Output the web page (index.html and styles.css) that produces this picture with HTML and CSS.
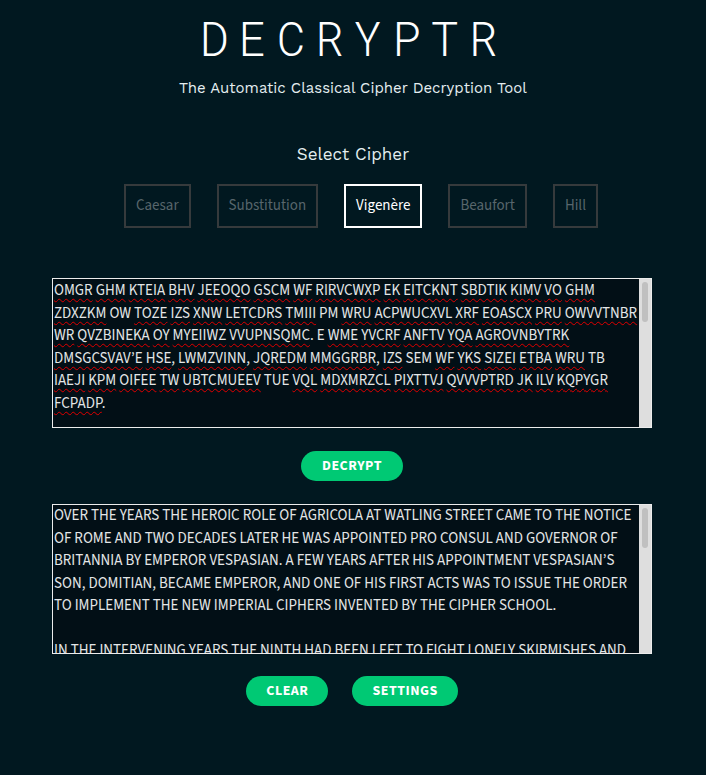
FILE: index.html
```html
<!DOCTYPE html>
<html lang="en">
<head>
<meta charset="utf-8">
<title>Decryptr</title>
<link rel="stylesheet" href="styles.css">
</head>
<body>
<main class="app">
  <header class="header">
    <h1 class="title">DECRYPTR</h1>
    <p class="subtitle">The Automatic Classical Cipher Decryption Tool</p>
  </header>

  <section class="cipher-select">
    <h2 class="select-label">Select Cipher</h2>
    <div class="cipher-row">
      <button class="cipher-btn">Caesar</button>
      <button class="cipher-btn">Substitution</button>
      <button class="cipher-btn active">Vigenère</button>
      <button class="cipher-btn">Beaufort</button>
      <button class="cipher-btn">Hill</button>
    </div>
  </section>

  <div class="textbox input-box">
    <div class="textbox-content">
      <span class="sp">OMGR</span> <span class="sp">GHM</span> <span class="sp">KTEIA</span> <span class="sp">BHV</span> <span class="sp">JEEOQO</span> <span class="sp">GSCM</span> <span class="sp">WF</span> <span class="sp">RIRVCWXP</span> <span class="sp">EK</span> <span class="sp">EITCKNT</span> <span class="sp">SBDTIK</span> <span class="sp">KIMV</span> <span class="sp">VO</span> <span class="sp">GHM</span><br>
      <span class="sp">ZDXZKM</span> OW <span class="sp">TOZE</span> <span class="sp">IZS</span> <span class="sp">XNW</span> <span class="sp">LETCDRS</span> <span class="sp">TMIII</span> PM <span class="sp">WRU</span> <span class="sp">ACPWUCXVL</span> <span class="sp">XRF</span> <span class="sp">EOASCX</span> <span class="sp">PRU</span> <span class="sp">OWVVTNBR</span><br>
      <span class="sp">WR</span> <span class="sp">QVZBINEKA</span> <span class="sp">OY</span> <span class="sp">MYEIIWZ</span> <span class="sp">VVUPNSQMC</span>. E <span class="sp">WME</span> <span class="sp">YVCRF</span> <span class="sp">ANFTV</span> <span class="sp">YQA</span> <span class="sp">AGROVNBYTRK</span><br>
      <span class="sp">DMSGCSVAV’E</span> <span class="sp">HSE</span>, <span class="sp">LWMZVINN</span>, <span class="sp">JQREDM</span> <span class="sp">MMGGRBR</span>, <span class="sp">IZS</span> SEM <span class="sp">WF</span> <span class="sp">YKS</span> <span class="sp">SIZEI</span> <span class="sp">ETBA</span> <span class="sp">WRU</span> TB<br>
      <span class="sp">IAEJI</span> <span class="sp">KPM</span> <span class="sp">OIFEE</span> <span class="sp">TW</span> <span class="sp">UBTCMUEEV</span> TUE <span class="sp">VQL</span> <span class="sp">MDXMRZCL</span> <span class="sp">PIXTTVJ</span> <span class="sp">QVVVPTRD</span> <span class="sp">JK</span> <span class="sp">ILV</span> <span class="sp">KQPYGR</span><br>
      <span class="sp">FCPADP</span>.
    </div>
    <div class="scrollbar"><div class="thumb"></div></div>
  </div>

  <div class="action-row decrypt-row">
    <button class="pill-btn decrypt-btn">DECRYPT</button>
  </div>

  <div class="textbox output-box">
    <div class="textbox-content">
      OVER THE YEARS THE HEROIC ROLE OF AGRICOLA AT WATLING STREET CAME TO THE NOTICE<br>
      OF ROME AND TWO DECADES LATER HE WAS APPOINTED PRO CONSUL AND GOVERNOR OF<br>
      BRITANNIA BY EMPEROR VESPASIAN. A FEW YEARS AFTER HIS APPOINTMENT VESPASIAN’S<br>
      SON, DOMITIAN, BECAME EMPEROR, AND ONE OF HIS FIRST ACTS WAS TO ISSUE THE ORDER<br>
      TO IMPLEMENT THE NEW IMPERIAL CIPHERS INVENTED BY THE CIPHER SCHOOL.<br>
      <br>
      IN THE INTERVENING YEARS THE NINTH HAD BEEN LEFT TO FIGHT LONELY SKIRMISHES AND
    </div>
    <div class="scrollbar"><div class="thumb"></div></div>
  </div>

  <div class="action-row bottom-row">
    <button class="pill-btn">CLEAR</button>
    <button class="pill-btn">SETTINGS</button>
  </div>
</main>
</body>
</html>
```
FILE: styles.css
```css
html, body {
  margin: 0;
  padding: 0;
  background: #011820;
}

body {
  font-family: "Source Sans 3", "Source Sans Pro", "Liberation Sans", sans-serif;
  color: #e6e6e6;
  height: 775px;
  overflow: hidden;
}

.app {
  display: flex;
  flex-direction: column;
  align-items: center;
}

.header {
  display: flex;
  flex-direction: column;
  align-items: center;
}

.title {
  margin: 14px 0 0;
  font-family: "Roboto Mono", "DejaVu Sans Mono", monospace;
  font-weight: 300;
  font-size: 48px;
  line-height: 48px;
  letter-spacing: 9.6px;
  padding-left: 1px;
  color: #ffffff;
}

.subtitle {
  margin: 16px 0 0;
  font-family: "Work Sans", "Inter", sans-serif;
  font-size: 15px;
  line-height: 20px;
  color: #e4eef0;
}

.cipher-select {
  display: flex;
  flex-direction: column;
  align-items: center;
}

.select-label {
  margin: 44px 0 0;
  font-family: "Work Sans", "Inter", sans-serif;
  font-weight: 400;
  font-size: 17px;
  line-height: 24px;
  color: #e4eef0;
}

.cipher-row {
  display: flex;
  gap: 26px;
  margin-top: 18px;
  padding-left: 16px;
}

.cipher-btn {
  box-sizing: border-box;
  height: 44px;
  padding: 0 10px;
  background: transparent;
  border: 2px solid #363a3c;
  color: #58666c;
  font-family: "Source Sans 3", "Source Sans Pro", sans-serif;
  font-size: 15px;
  line-height: 20px;
}

.cipher-btn.active {
  border-color: #ffffff;
  color: #ffffff;
}

.textbox {
  box-sizing: border-box;
  display: flex;
  width: 600px;
  height: 150px;
  margin-top: 50px;
  margin-right: 2px;
  border: 1px solid #ececec;
  background: #020f16;
}

.textbox-content {
  flex: 1;
  overflow: hidden;
  padding: 1px 1px 0;
  font-size: 15px;
  line-height: 22.5px;
  white-space: nowrap;
  color: #e4e6e7;
}

.scrollbar {
  box-sizing: border-box;
  width: 12px;
  padding: 3px 3px;
  background: #dedede;
}

.thumb {
  height: 40px;
  border-radius: 3px;
  background: #c0c0c0;
}

.output-box {
  margin-top: 23px;
}

.output-box .textbox-content {
  padding-top: 0;
}

.sp {
  text-decoration: underline wavy #e00000;
  text-decoration-thickness: 1px;
  text-underline-offset: 3px;
}

.action-row {
  display: flex;
  justify-content: center;
  gap: 24px;
  margin-top: 23px;
  margin-right: 2px;
}

.bottom-row {
  margin-top: 22px;
}

.pill-btn {
  height: 30px;
  padding: 0 20px;
  border: none;
  border-radius: 15px;
  background: #00c974;
  color: #ffffff;
  font-family: "Source Sans 3", "Source Sans Pro", sans-serif;
  font-weight: 700;
  font-size: 14px;
  letter-spacing: 0.5px;
}

.decrypt-btn {
  padding: 0 21px;
}
```
